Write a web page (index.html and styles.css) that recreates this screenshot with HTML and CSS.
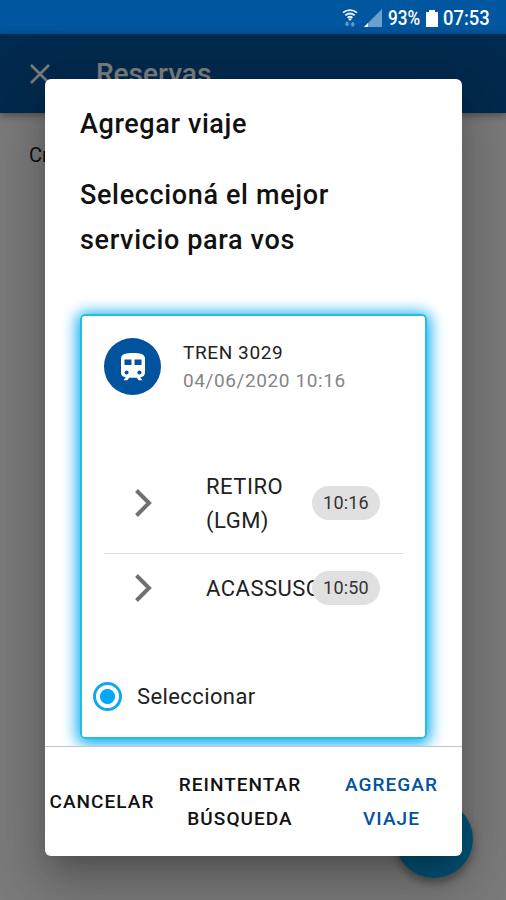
FILE: index.html
```html
<!DOCTYPE html>
<html lang="es">
<head>
    <meta charset="UTF-8">
    <meta name="viewport" content="width=device-width, initial-scale=1.0">
    <title>Reservas</title>
    <link rel="stylesheet" href="styles.css">
</head>
<body>
    <div class="status-bar">
        <svg class="wifi" width="16" height="18" viewBox="0 0 16 18">
            <path d="M1 3.6C5 .2 11 .2 15 3.6M3.3 6.3c2.8-2.2 6.6-2.2 9.4 0M5.6 8.8c1.4-1.2 3.4-1.2 4.8 0" fill="none" stroke="#e6eff7" stroke-width="1.8"/>
            <path d="M6 9.6h4L8 12z" fill="#fff"/>
            <path d="M3.8 12.8h2.6v2H7.6L5.1 17.6 2.6 14.8h1.2zM9.4 17.4v-2H8.2l2.5-2.8 2.5 2.8H12v2z" fill="#5f9acb"/>
        </svg>
        <svg class="signal" width="18" height="18" viewBox="0 0 18 18">
            <path d="M18 0v18H0z" fill="#6c9fcd"/>
            <path d="M4 14v4H0z" fill="#fff"/>
        </svg>
        <span class="percent">93%</span>
        <svg class="battery" width="12" height="17" viewBox="0 0 12 17">
            <path d="M3 0h6v2h3v15H0V2h3z" fill="#fff"/>
        </svg>
        <span class="clock">07:53</span>
    </div>

    <div class="screen">
        <header class="app-bar">
            <svg class="close" width="20" height="20" viewBox="0 0 20 20">
                <path d="M1 1l18 18M19 1L1 19" fill="none" stroke="#fff" stroke-width="2.6"/>
            </svg>
            <h1>Reservas</h1>
        </header>
        <p class="page-text">Cr</p>
        <div class="fab"></div>
    </div>

    <div class="overlay">
        <div class="dialog">
            <div class="dialog-content">
                <h2>Agregar viaje</h2>
                <p class="subtitle">Seleccioná el mejor servicio para vos</p>

                <div class="card">
                    <div class="card-header">
                        <div class="avatar">
                            <svg width="24" height="28" viewBox="0 0 24 28">
                                <path d="M12 0C5 0 0 .8 0 5.5v14c0 2.8 2 4.7 4.8 4.7L2.5 27.3h3.8l2-2.6h7.4l2 2.6h3.8l-2.3-3.1c2.8 0 4.8-1.9 4.8-4.7v-14C24 .8 19 0 12 0z" fill="#fff"/>
                                <path d="M3.5 6.5h7V12h-7zM13.5 6.5h7V12h-7z" fill="#01539d"/>
                                <circle cx="5.6" cy="19.5" r="2" fill="#01539d"/>
                                <circle cx="18.4" cy="19.5" r="2" fill="#01539d"/>
                            </svg>
                        </div>
                        <div class="train">
                            <div class="train-name">TREN 3029</div>
                            <div class="train-date">04/06/2020 10:16</div>
                        </div>
                    </div>

                    <div class="stops">
                        <div class="stop first">
                            <svg class="chevron" width="17" height="28" viewBox="0 0 17 28">
                                <path d="M1.5 1.5L14 14 1.5 26.5" fill="none" stroke="#707070" stroke-width="4"/>
                            </svg>
                            <span class="station">RETIRO (LGM)</span>
                            <span class="chip">10:16</span>
                        </div>
                        <div class="stop">
                            <svg class="chevron" width="17" height="28" viewBox="0 0 17 28">
                                <path d="M1.5 1.5L14 14 1.5 26.5" fill="none" stroke="#707070" stroke-width="4"/>
                            </svg>
                            <span class="station">ACASSUSO</span>
                            <span class="chip">10:50</span>
                        </div>
                    </div>

                    <label class="option">
                        <span class="radio"></span>
                        <span class="option-label">Seleccionar</span>
                    </label>
                </div>
            </div>

            <div class="dialog-actions">
                <button class="btn cancel">CANCELAR</button>
                <button class="btn retry">REINTENTAR BÚSQUEDA</button>
                <button class="btn primary">AGREGAR VIAJE</button>
            </div>
        </div>
    </div>
</body>
</html>
```

FILE: styles.css
```css
* {
    margin: 0;
    padding: 0;
    box-sizing: border-box;
}

body {
    font-family: Roboto, sans-serif;
    height: 900px;
    overflow: hidden;
    position: relative;
    background: #fafafa;
    color: #212121;
}

.status-bar {
    height: 34px;
    background: #01579f;
    color: #fff;
    display: flex;
    align-items: center;
    justify-content: flex-end;
    padding: 2px 15px 0 0;
    font-size: 20px;
    font-weight: 500;
}

.wifi {
    margin-right: 6px;
}

.percent {
    margin-left: 6px;
    width: 34px;
    transform: scaleX(0.86);
    transform-origin: left;
}

.battery {
    margin: 0 5px 0 4px;
}

.clock {
    width: 48px;
    transform: scaleX(0.92);
    transform-origin: left;
}

.screen {
    height: 866px;
    position: relative;
}

.app-bar {
    height: 79px;
    background: #01579f;
    box-shadow: 0 2px 8px rgba(0, 0, 0, 0.4);
    color: #fff;
    display: flex;
    align-items: center;
    padding-left: 30px;
}

.app-bar h1 {
    font-size: 28px;
    font-weight: 500;
    margin-left: 46px;
}

.page-text {
    padding: 30px 29px;
    font-size: 20px;
}

.fab {
    position: absolute;
    right: 33px;
    bottom: 22px;
    width: 78px;
    height: 78px;
    border-radius: 50%;
    background: #03a9f4;
    box-shadow: 0 5px 8px rgba(0, 0, 0, 0.35);
}

.overlay {
    position: absolute;
    top: 34px;
    left: 0;
    right: 0;
    bottom: 0;
    background: rgba(0, 0, 0, 0.51);
    padding: 45px 44px 44px 45px;
}

.dialog {
    height: 777px;
    background: #fff;
    border-radius: 6px;
    overflow: hidden;
    box-shadow: 0 15px 21px -10px rgba(0, 0, 0, 0.2), 0 30px 50px 4px rgba(0, 0, 0, 0.14), 0 12px 60px 11px rgba(0, 0, 0, 0.12);
}

.dialog-content {
    height: 667px;
    padding: 23px 35px 0;
    overflow: hidden;
}

.dialog h2 {
    color: #111;
    font-size: 27px;
    line-height: 45px;
    font-weight: 500;
    letter-spacing: 0.6px;
}

.subtitle {
    color: #111;
    font-size: 27px;
    line-height: 45px;
    font-weight: 500;
    letter-spacing: 0.65px;
    margin-top: 26px;
    padding-right: 40px;
}

.card {
    height: 425px;
    margin-top: 51px;
    border: 2px solid #26bfd5;
    border-radius: 5px;
    box-shadow: 0 2px 15px 3px #03a9f4;
}

.card-header {
    display: flex;
    align-items: center;
    padding: 22px 22px 0;
}

.avatar {
    width: 57px;
    height: 57px;
    border-radius: 50%;
    background: #01539d;
    display: flex;
    align-items: center;
    justify-content: center;
}

.train {
    margin-left: 22px;
    font-size: 19px;
    line-height: 28px;
    letter-spacing: 0.6px;
}

.train-date {
    color: #858585;
}

.stops {
    margin: 57px 22px 0;
}

.stop {
    height: 68px;
    display: flex;
    align-items: center;
}

.stop.first {
    height: 102px;
    border-bottom: 1px solid #dcdcdc;
}

.chevron {
    margin-left: 31px;
    flex-shrink: 0;
}

.station {
    width: 106px;
    margin-left: 54px;
    padding-top: 2px;
    font-size: 22px;
    line-height: 34px;
    letter-spacing: 0.5px;
    flex-shrink: 0;
}

.chip {
    width: 68px;
    height: 34px;
    border-radius: 17px;
    background: #e0e0e0;
    font-size: 18px;
    line-height: 34px;
    text-align: center;
    letter-spacing: 0.2px;
    color: #333;
    position: relative;
}

.option {
    display: flex;
    align-items: center;
    margin: 60px 0 0 11px;
}

.radio {
    width: 29px;
    height: 29px;
    border-radius: 50%;
    border: 3px solid #12a8ec;
    background: radial-gradient(circle, #03a9f4 7px, #fff 8px);
}

.option-label {
    margin-left: 15px;
    font-size: 22px;
    letter-spacing: 0.4px;
}

.dialog-actions {
    height: 110px;
    border-top: 1px solid #c4c4c4;
    display: flex;
    align-items: center;
}

.btn {
    background: none;
    border: none;
    font-family: inherit;
    font-size: 19px;
    line-height: 34px;
    font-weight: 500;
    letter-spacing: 1.05px;
    color: #111;
}

.cancel {
    width: 114px;
}

.retry {
    width: 162px;
}

.primary {
    width: 141px;
    padding: 0 20px;
    color: #01539d;
}
```
